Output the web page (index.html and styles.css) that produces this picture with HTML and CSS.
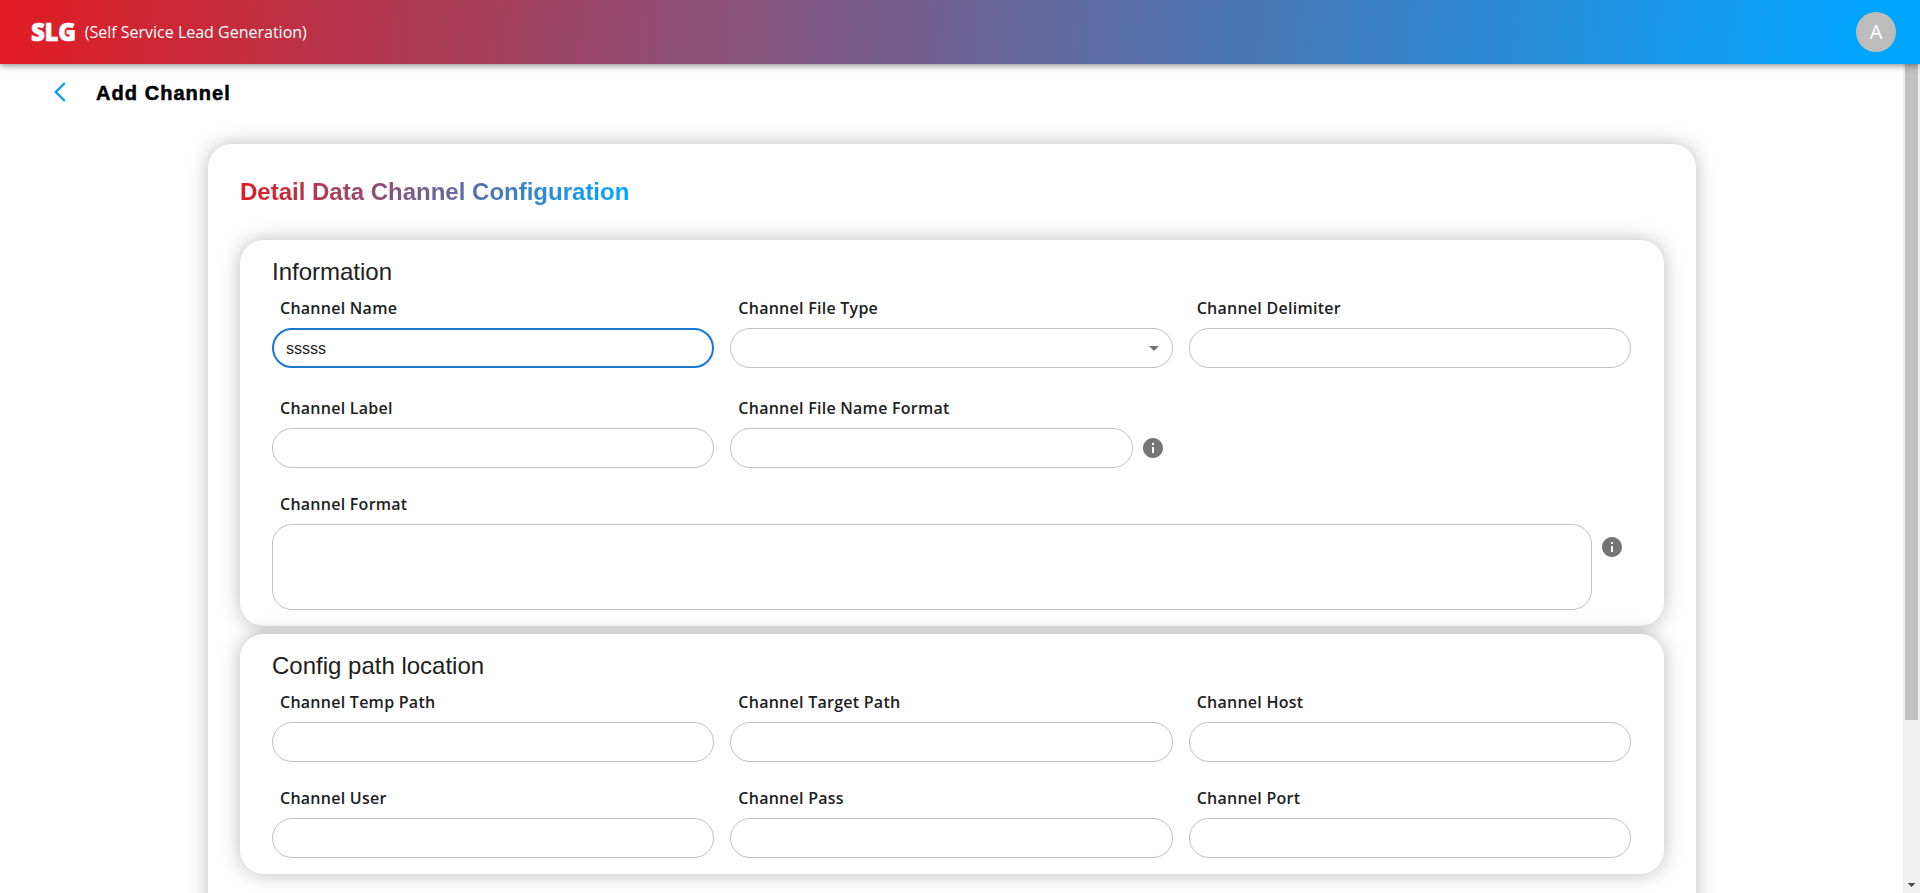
FILE: index.html
```html
<!DOCTYPE html>
<html lang="en">
<head>
<meta charset="utf-8">
<title>SLG - Add Channel</title>
<link rel="stylesheet" href="styles.css">
</head>
<body>
<header class="topbar">
  <div class="brand"><span class="brand-logo">SLG</span><span class="brand-name">(Self Service Lead Generation)</span></div>
  <div class="avatar">A</div>
</header>
<div class="body-row">
  <main class="content">
    <div class="page-head">
      <svg class="back" width="12" height="20" viewBox="0 0 12 20"><path d="M10.800 1 1.800 10l9 9" fill="none" stroke="#00a1ff" stroke-width="2.400"/></svg>
      <h1 class="page-title">Add Channel</h1>
    </div>
    <section class="card">
      <h2 class="card-title">Detail Data Channel Configuration</h2>
      <div class="panel">
        <h3 class="panel-title">Information</h3>
        <div class="grid first-row">
          <label class="field"><span class="label">Channel Name</span><span class="input focused">sssss</span></label>
          <label class="field"><span class="label">Channel File Type</span><span class="input select"><svg width="24" height="24" viewBox="0 0 24 24" fill="#757575"><path d="M7 10l5 5 5-5z"/></svg></span></label>
          <label class="field"><span class="label">Channel Delimiter</span><span class="input"></span></label>
        </div>
        <div class="grid">
          <label class="field"><span class="label">Channel Label</span><span class="input"></span></label>
          <label class="field"><span class="label">Channel File Name Format</span><span class="with-info"><span class="input"></span><svg class="info" width="24" height="24" viewBox="0 0 24 24" fill="#757575"><path d="M12 2C6.480 2 2 6.480 2 12s4.480 10 10 10 10-4.480 10-10S17.520 2 12 2zm1 15h-2v-6h2v6zm0-8h-2V7h2v2z"/></svg></span></label>
          <label class="field wide"><span class="label">Channel Format</span><span class="with-info"><span class="input area"></span><svg class="info" width="24" height="24" viewBox="0 0 24 24" fill="#757575"><path d="M12 2C6.480 2 2 6.480 2 12s4.480 10 10 10 10-4.480 10-10S17.520 2 12 2zm1 15h-2v-6h2v6zm0-8h-2V7h2v2z"/></svg></span></label>
        </div>
      </div>
      <div class="panel">
        <h3 class="panel-title">Config path location</h3>
        <div class="grid">
          <label class="field"><span class="label">Channel Temp Path</span><span class="input"></span></label>
          <label class="field"><span class="label">Channel Target Path</span><span class="input"></span></label>
          <label class="field"><span class="label">Channel Host</span><span class="input"></span></label>
          <label class="field"><span class="label">Channel User</span><span class="input"></span></label>
          <label class="field"><span class="label">Channel Pass</span><span class="input"></span></label>
          <label class="field"><span class="label">Channel Port</span><span class="input"></span></label>
        </div>
      </div>
    </section>
  </main>
  <div class="scrollbar"><div class="thumb"></div><svg class="arrow" width="7" height="4" viewBox="0 0 7 4" fill="#505050" shape-rendering="crispEdges"><path d="M0 0h7v1H6v1H5v1H4v1H3V3H2V2H1V1H0z"/></svg></div>
</div>
</body>
</html>
```
FILE: styles.css
```css
* { box-sizing: border-box; }
body {
  margin: 0;
  height: 893px;
  overflow: hidden;
  display: flex;
  flex-direction: column;
  background: #fff;
  color: #212121;
  font-family: "Open Sans", "Noto Sans", sans-serif;
  font-size: 16px;
}
h1, h2, h3 { margin: 0; }
.topbar {
  position: relative;
  z-index: 2;
  flex: none;
  display: flex;
  align-items: center;
  justify-content: space-between;
  height: 64px;
  padding: 0 24px 0 31px;
  color: #fff;
  background: linear-gradient(96deg, #e11b22 0%, #00a5ff 97%);
  box-shadow: 0 2px 4px -1px rgba(0,0,0,.2), 0 4px 5px rgba(0,0,0,.14), 0 1px 10px rgba(0,0,0,.12);
}
.brand { display: flex; align-items: center; gap: 9px; }
.brand-logo {
  font-size: 24px;
  font-weight: 800;
  line-height: 32px;
  letter-spacing: -.3px;
  -webkit-text-stroke: .6px #fff;
}
.brand-name { font-size: 16px; line-height: 24px; }
.avatar {
  display: flex;
  align-items: center;
  justify-content: center;
  width: 40px;
  height: 40px;
  border-radius: 50%;
  background: #bdbdbd;
  font-size: 20px;
  line-height: 20px;
}
.body-row { flex: 1; min-height: 0; display: flex; }
.content { flex: 1; min-width: 0; overflow: hidden; }
.page-head { display: flex; align-items: center; height: 56px; padding-left: 54px; }
.page-title {
  margin-left: 30px;
  padding-top: 2px;
  color: #000;
  font: 700 20px/24px "Liberation Sans", Arial, sans-serif;
  letter-spacing: 1.05px;
  -webkit-text-stroke: .5px #000;
}
.card {
  height: 900px;
  margin: 24px 207px 0 208px;
  padding: 32px;
  border-radius: 24px;
  background: #fff;
  box-shadow: 0 0 20px rgba(0,0,0,.27);
}
.card-title {
  width: max-content;
  margin-bottom: 32px;
  font: 700 24px/32px "Liberation Sans", Arial, sans-serif;
  background: linear-gradient(96deg, #e11b22 0%, #00a5ff 97%);
  background-clip: text;
  -webkit-background-clip: text;
  color: transparent;
}
.panel {
  margin-bottom: 8px;
  padding: 16px 33px 16px 32px;
  border-radius: 24px;
  background: #fff;
  box-shadow: 0 0 20px rgba(0,0,0,.27);
}
.panel-title {
  margin-bottom: 8px;
  font: 400 24px/32px "Liberation Sans", Arial, sans-serif;
}
.grid { display: grid; grid-template-columns: repeat(3, minmax(0, 1fr)); gap: 24px 16px; }
.first-row { margin-bottom: 28px; }
.field { display: flex; flex-direction: column; gap: 8px; }
.wide { grid-column: 1 / -1; }
.label { padding-left: 8px; font-weight: 600; line-height: 24px; letter-spacing: .26px; }
.input {
  flex: 1;
  display: flex;
  align-items: center;
  min-height: 40px;
  padding: 0 13px;
  border: 1px solid #c0c0c0;
  border-radius: 20px;
  font: 400 16px/20px "Liberation Sans", Arial, sans-serif;
}
.focused { border: 2px solid #1976d2; padding: 2px 12px 0; }
.select { justify-content: flex-end; padding: 0 6px; }
.area { height: 86px; }
.with-info { display: flex; align-items: flex-start; }
.info { flex: none; margin: 8px; }
.wide .info { margin: 11px 7px 8px 8px; }
.scrollbar {
  flex: none;
  display: flex;
  flex-direction: column;
  align-items: center;
  justify-content: space-between;
  width: 17px;
  padding-bottom: 6px;
  background: #f0f0f0;
}
.thumb { width: 13px; height: 656px; background: #c1c1c1; }
```
